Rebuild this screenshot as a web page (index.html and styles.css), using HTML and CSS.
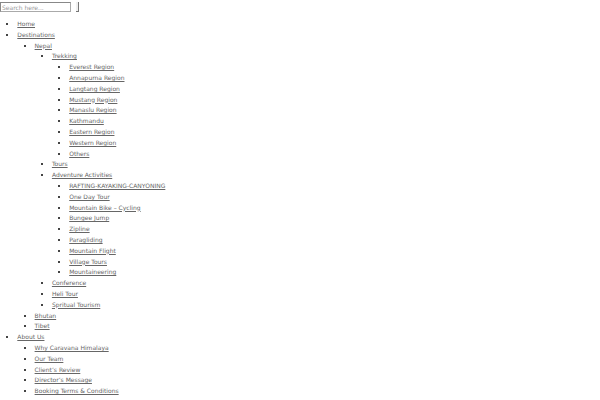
FILE: index.html
```html
<!DOCTYPE html>
<html>
<head>
<meta charset="utf-8">
<link rel="stylesheet" href="styles.css">
</head>
<body>
<form class="search">
<input class="search-input" type="text" placeholder="Search here..."><button class="search-btn" type="submit"></button>
</form>
<ul class="menu">
<li><a href="#">Home</a></li>
<li><a href="#">Destinations</a>
  <ul>
  <li><a href="#">Nepal</a>
    <ul>
    <li><a href="#">Trekking</a>
      <ul>
      <li><a href="#">Everest Region</a></li>
      <li><a href="#">Annapurna Region</a></li>
      <li><a href="#">Langtang Region</a></li>
      <li><a href="#">Mustang Region</a></li>
      <li><a href="#">Manaslu Region</a></li>
      <li><a href="#">Kathmandu</a></li>
      <li><a href="#">Eastern Region</a></li>
      <li><a href="#">Western Region</a></li>
      <li><a href="#">Others</a></li>
      </ul>
    </li>
    <li><a href="#">Tours</a></li>
    <li><a href="#">Adventure Activities</a>
      <ul>
      <li><a href="#">RAFTING-KAYAKING-CANYONING</a></li>
      <li><a href="#">One Day Tour</a></li>
      <li><a href="#">Mountain Bike – Cycling</a></li>
      <li><a href="#">Bungee Jump</a></li>
      <li><a href="#">Zipline</a></li>
      <li><a href="#">Paragliding</a></li>
      <li><a href="#">Mountain Flight</a></li>
      <li><a href="#">Village Tours</a></li>
      <li><a href="#">Mountaineering</a></li>
      </ul>
    </li>
    <li><a href="#">Conference</a></li>
    <li><a href="#">Heli Tour</a></li>
    <li><a href="#">Spritual Tourism</a></li>
    </ul>
  </li>
  <li><a href="#">Bhutan</a></li>
  <li><a href="#">Tibet</a></li>
  </ul>
</li>
<li><a href="#">About Us</a>
  <ul>
  <li><a href="#">Why Caravana Himalaya</a></li>
  <li><a href="#">Our Team</a></li>
  <li><a href="#">Client’s Review</a></li>
  <li><a href="#">Director’s Message</a></li>
  <li><a href="#">Booking Terms &amp; Conditions</a></li>
  </ul>
</li>
</ul>
</body>
</html>
```
FILE: styles.css
```css
html, body {
  margin: 0;
  padding: 0;
  background: #fff;
}
body {
  font-family: "DejaVu Sans", sans-serif;
  font-size: 6px;
  line-height: 10.8px;
  color: #555;
}
.search {
  display: flex;
  align-items: flex-start;
  margin: 0;
  padding-top: 2px;
  height: 10px;
}
.search-input {
  box-sizing: border-box;
  width: 71px;
  height: 10px;
  margin: 0;
  padding: 0 1px;
  border: 1px solid #aaa;
  border-top-color: #888;
  border-left-color: #888;
  font-family: "DejaVu Sans", sans-serif;
  font-size: 6px;
  color: #555;
  background: #fff;
}
.search-input::placeholder {
  color: #999;
}
.search-btn {
  box-sizing: border-box;
  width: 3px;
  height: 10px;
  margin: 0 0 0 5px;
  padding: 0;
  border: 0;
  border-right: 1px solid #777;
  border-bottom: 1px solid #777;
  background: #f0f0f0;
}
ul {
  padding-left: 17.3px;
  margin: 0;
  list-style: square;
}
.menu {
  margin-top: 7px;
}
a {
  color: #666;
  text-decoration: underline;
}
li::marker {
  color: #444;
}
```
